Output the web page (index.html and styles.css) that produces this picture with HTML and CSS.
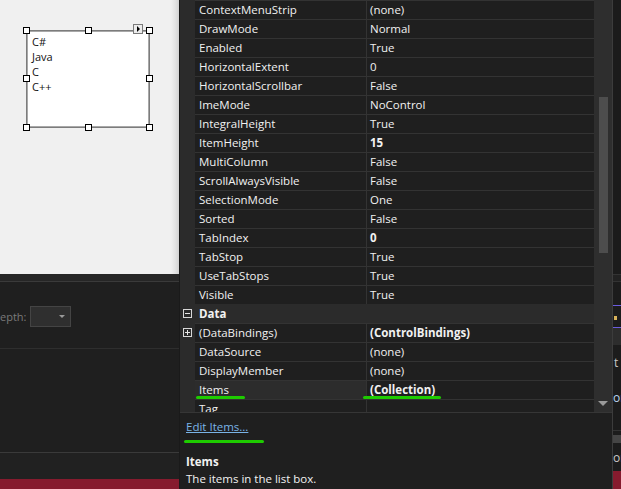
FILE: index.html
```html
<!DOCTYPE html>
<html>
<head>
<meta charset="utf-8">
<link rel="stylesheet" href="styles.css">
</head>
<body>
<div class="screen">
  <div class="left">
    <div class="designer">
      <div class="listbox">
        <div class="lb-item">C#</div>
        <div class="lb-item">Java</div>
        <div class="lb-item">C</div>
        <div class="lb-item">C++</div>
      </div>
      <span class="handle h1"></span><span class="handle h2"></span><span class="handle h3"></span>
      <span class="handle h4"></span><span class="handle h5"></span>
      <span class="handle h6"></span><span class="handle h7"></span><span class="handle h8"></span>
      <span class="smarttag"><span class="tri"></span></span>
    </div>
    <div class="toolstrip"></div>
    <div class="opts">
      <span class="opt-label">epth:</span>
      <span class="combo"><span class="combo-arrow"></span></span>
    </div>
    <div class="pane"></div>
    <div class="pane2"></div>
    <div class="status"></div>
  </div>

  <div class="props">
    <div class="grid">
      <div class="rows">
        <div class="row"><span class="gut"></span><span class="name">ContextMenuStrip</span><span class="val">(none)</span></div>
        <div class="row"><span class="gut"></span><span class="name">DrawMode</span><span class="val">Normal</span></div>
        <div class="row"><span class="gut"></span><span class="name">Enabled</span><span class="val">True</span></div>
        <div class="row"><span class="gut"></span><span class="name">HorizontalExtent</span><span class="val">0</span></div>
        <div class="row"><span class="gut"></span><span class="name">HorizontalScrollbar</span><span class="val">False</span></div>
        <div class="row"><span class="gut"></span><span class="name">ImeMode</span><span class="val">NoControl</span></div>
        <div class="row"><span class="gut"></span><span class="name">IntegralHeight</span><span class="val">True</span></div>
        <div class="row"><span class="gut"></span><span class="name">ItemHeight</span><span class="val bold">15</span></div>
        <div class="row"><span class="gut"></span><span class="name">MultiColumn</span><span class="val">False</span></div>
        <div class="row"><span class="gut"></span><span class="name">ScrollAlwaysVisible</span><span class="val">False</span></div>
        <div class="row"><span class="gut"></span><span class="name">SelectionMode</span><span class="val">One</span></div>
        <div class="row"><span class="gut"></span><span class="name">Sorted</span><span class="val">False</span></div>
        <div class="row"><span class="gut"></span><span class="name">TabIndex</span><span class="val bold">0</span></div>
        <div class="row"><span class="gut"></span><span class="name">TabStop</span><span class="val">True</span></div>
        <div class="row"><span class="gut"></span><span class="name">UseTabStops</span><span class="val">True</span></div>
        <div class="row"><span class="gut"></span><span class="name">Visible</span><span class="val">True</span></div>
        <div class="row cat"><span class="gut"><span class="expander minus"></span></span><span class="name">Data</span></div>
        <div class="row"><span class="gut"><span class="expander plus"></span></span><span class="name">(DataBindings)</span><span class="val bold">(ControlBindings)</span></div>
        <div class="row"><span class="gut"></span><span class="name">DataSource</span><span class="val">(none)</span></div>
        <div class="row"><span class="gut"></span><span class="name">DisplayMember</span><span class="val">(none)</span></div>
        <div class="row"><span class="gut"></span><span class="name sel">Items</span><span class="val bold">(Collection)</span></div>
        <div class="row"><span class="gut"></span><span class="name">Tag</span><span class="val"></span></div>
      </div>
      <div class="vscroll">
        <span class="thumb"></span>
        <span class="down-arrow"></span>
      </div>
      <span class="mark mark-name"></span>
      <span class="mark mark-val"></span>
    </div>
    <div class="desc">
      <div class="desc-link">Edit Items...</div>
      <div class="desc-title">Items</div>
      <div class="desc-text">The items in the list box.</div>
      <span class="mark mark-link"></span>
    </div>
  </div>

  <div class="rstrip">
    <div class="rs-top"></div>
    <div class="rs-tool"></div>
    <div class="rs-gap"></div>
    <div class="rs-tab"><span class="rs-glyph"></span></div>
    <div class="rs-gray"></div>
    <div class="rs-text rs-t">t</div>
    <div class="rs-text rs-or">or</div>
    <div class="rs-fill"></div>
    <div class="rs-bar"></div>
    <div class="rs-text rs-or2">or</div>
    <div class="rs-status"></div>
  </div>
</div>
</body>
</html>
```
FILE: styles.css
```css
* { box-sizing: border-box; margin: 0; padding: 0; }
html, body { width: 621px; height: 489px; overflow: hidden; }
body {
  background: #1f1f1f;
  font-family: "Segoe UI", "Open Sans", sans-serif;
  font-size: 11.5px;
  color: #f1f1f1;
}
.screen { display: flex; width: 621px; height: 489px; }

/* ---------- left: designer + bottom panes ---------- */
.left { width: 179px; flex: none; display: flex; flex-direction: column; }
.designer {
  height: 274px;
  position: relative;
  background: linear-gradient(to right, #f0f0f0 0, #f0f0f0 171px, #e4e4e4 175px, #d2d2d2 179px);
}
.listbox {
  position: absolute;
  left: 26px; top: 30px;
  width: 124px; height: 98px;
  background: #fff;
  border: 1px solid #7c7c7c;
  box-shadow: inset 0 0 0 1px #a8a8a8;
  padding: 3px 0 0 5px;
  color: #111;
  font-size: 11px;
}
.lb-item { height: 15px; line-height: 15px; }
.handle {
  position: absolute;
  width: 7px; height: 7px;
  background: #fff;
  border: 1px solid #000;
}
.h1 { left: 23px; top: 27px; }
.h2 { left: 85px; top: 27px; }
.h3 { left: 146px; top: 27px; }
.h4 { left: 23px; top: 75px; }
.h5 { left: 146px; top: 75px; }
.h6 { left: 23px; top: 124px; }
.h7 { left: 85px; top: 124px; }
.h8 { left: 146px; top: 124px; }
.smarttag {
  position: absolute;
  left: 133px; top: 24px;
  width: 10px; height: 10px;
  background: #ececec;
  border: 1px solid #7a7a7a;
  display: flex; align-items: center; justify-content: center;
}
.smarttag .tri {
  width: 0; height: 0;
  border-top: 3px solid transparent;
  border-bottom: 3px solid transparent;
  border-left: 3px solid #000;
  margin-left: 1px;
}
.toolstrip { height: 7px; background: #262626; }
.opts {
  height: 67px;
  border-top: 1px solid #3a3a3a;
  padding-top: 24px;
  display: flex;
  align-items: flex-start;
}
.opt-label {
  width: 30px;
  height: 21px;
  line-height: 21px;
  color: #7a7a7a;
  font-size: 11px;
}
.combo {
  width: 41px; height: 21px;
  background: #2f2f2f;
  border: 1px solid #444;
  display: flex; align-items: center; justify-content: flex-end;
  padding-right: 5px;
}
.combo-arrow {
  width: 0; height: 0;
  border-left: 3px solid transparent;
  border-right: 3px solid transparent;
  border-top: 3px solid #9a9a9a;
}
.pane { height: 104px; border-top: 1px solid #2e2e2e; }
.pane2 { height: 27px; border-top: 1px solid #3a3a3a; background: #212121; }
.status { height: 10px; background: #861b2e; }

/* ---------- properties panel ---------- */
.props {
  width: 434px; flex: none;
  display: flex; flex-direction: column;
  border-left: 1px solid #1a1a1a;
  border-right: 1px solid #3c3c3c;
  background: #1f1f1f;
}
.grid { height: 412px; display: flex; overflow: hidden; position: relative; }
.rows { width: 414px; flex: none; }
.row { display: flex; height: 19px; }
.gut {
  width: 15px; flex: none;
  background: #2b2b2b;
  display: flex; align-items: center; justify-content: center;
}
.name {
  width: 172px; flex: none;
  border-top: 1px solid #333;
  border-right: 1px solid #333;
  padding-left: 4px;
  line-height: 18px;
  white-space: nowrap; overflow: hidden;
}
.name.sel { background: #2c2c2c; }
.val {
  flex: 1;
  border-top: 1px solid #333;
  padding-left: 3px;
  line-height: 18px;
  white-space: nowrap; overflow: hidden;
}
.bold { font-weight: bold; }
.row.cat { background: #2b2b2b; }
.row.cat .name { border: none; font-weight: bold; line-height: 19px; }
.expander {
  width: 9px; height: 9px;
  border: 1px solid #d8d8d8;
  position: relative;
}
.expander::before {
  content: "";
  position: absolute;
  left: 1px; top: 3px;
  width: 5px; height: 1px;
  background: #e8e8e8;
}
.expander.plus::after {
  content: "";
  position: absolute;
  left: 3px; top: 1px;
  width: 1px; height: 5px;
  background: #e8e8e8;
}
.vscroll {
  width: 18px; flex: none;
  background: #2e2e2e;
  display: flex; flex-direction: column; align-items: center;
}
.thumb {
  margin-top: 97px;
  width: 9px; height: 156px;
  background: #4d4d4d;
}
.down-arrow {
  margin-top: 148px;
  width: 0; height: 0;
  border-left: 5px solid transparent;
  border-right: 5px solid transparent;
  border-top: 5px solid #9a9a9a;
}
.mark {
  position: absolute;
  height: 3px;
  background: #1ecb00;
  border-radius: 2px;
}
.mark-name { left: 16px; top: 396px; width: 49px; }
.mark-val { left: 183px; top: 396px; width: 78px; }
.desc {
  flex: 1;
  border-top: 1px solid #363636;
  padding: 6px 0 0 6px;
  position: relative;
  line-height: 16px;
}
.desc-link { color: #7ab4e6; text-decoration: underline; }
.desc-title { font-weight: bold; margin-top: 19px; }
.desc-text { margin-top: 1px; }
.mark-link { left: 4px; top: 27px; width: 80px; }

/* ---------- right strip (neighbouring window edge) ---------- */
.rstrip { width: 8px; flex: none; display: flex; flex-direction: column; background: #1c1c1c; overflow: hidden; font-size: 12px; }
.rs-top { height: 274px; background: #1b1b1b; }
.rs-tool { height: 8px; border-top: 1px solid #333; border-bottom: 1px solid #333; background: #222; }
.rs-gap { height: 23px; }
.rs-tab { height: 23px; border-top: 1px solid #6b5ce0; border-bottom: 1px solid #6b5ce0; position: relative; }
.rs-glyph { position: absolute; left: 1px; top: 10px; width: 3px; height: 4px; background: #d8b25a; }
.rs-gray { height: 17px; background: #2d2d2d; }
.rs-text { height: 18px; line-height: 18px; color: #c8c8c8; white-space: nowrap; }
.rs-t { margin-top: 9px; margin-left: 1px; }
.rs-or { margin-top: 17px; color: #b8d4ee; }
.rs-fill { height: 24px; border-bottom: 1px solid #333; }
.rs-bar { height: 8px; margin-top: 4px; background: #454545; }
.rs-or2 { margin-top: 6px; }
.rs-status { flex: 1; background: #861b2e; margin-top: 4px; }
```
